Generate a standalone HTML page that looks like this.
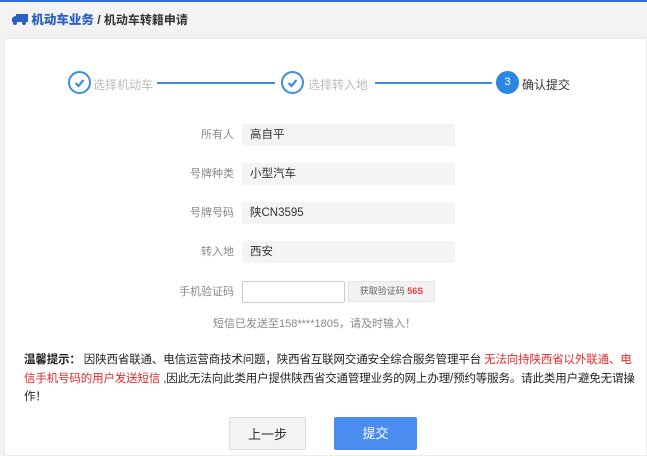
<!DOCTYPE html>
<html><head><meta charset="utf-8"><style>
*{margin:0;padding:0;box-sizing:border-box}
body{width:647px;height:456px;background:#f2f2f2;font-family:"Liberation Sans","Noto Sans CJK SC",sans-serif;position:relative;overflow:hidden;font-size:12px;color:#333}
.top{position:absolute;left:0;top:0;width:647px;height:2px;background:#2f6fd6}
.hdr{position:absolute;left:0;top:2px;width:647px;height:28px;background:#f3f3f3}
.hdr .t{position:absolute;left:12px;top:7px;font-size:12px;font-weight:bold;color:#333}
.hdr .t b{color:#2a5fc4;font-size:12.5px}
.card{position:absolute;left:4px;top:38px;width:643px;height:418px;background:#fff;border:1px solid #ececec}
.a{position:absolute}
.circ{position:absolute;width:23px;height:23px;border-radius:50%;border:2px solid #3b8de0;background:#fff}
.st{position:absolute;top:76px;font-size:12px;color:#bbb}
.ln{position:absolute;top:82px;height:2px;background:#3b8de0}
.lab{position:absolute;width:80px;left:154px;text-align:right;color:#888;font-size:11px;height:22px;line-height:22px}
.box{position:absolute;left:242px;width:213px;height:22px;background:#f4f4f4;padding-left:8px;line-height:22px;font-size:11.5px;color:#333}
.warn{position:absolute;left:24px;top:351px;width:612px;font-size:11.5px;line-height:18.5px;color:#222;letter-spacing:-0.15px}
.warn .r{color:#e62a2a}
.btn{position:absolute;top:417px;height:33px;line-height:33px;text-align:center;font-size:13px;border-radius:2px}
</style></head><body>
<div class="top"></div>
<div class="hdr"><div class="t"><svg width="16" height="12" style="vertical-align:-1px"><rect x="4" y="1" width="12" height="8" fill="#2a5fc4"/><path d="M0 5 L3 3 L4 3 L4 9 L0 9Z" fill="#2a5fc4"/><circle cx="3" cy="10" r="2" fill="#2a5fc4"/><circle cx="12" cy="10" r="2" fill="#2a5fc4"/></svg> <b>机动车业务</b> / 机动车转籍申请</div></div>
<div class="card"></div>
<div class="circ" style="left:68px;top:71px"></div>
<svg class="a" style="left:68px;top:71px" width="23" height="23"><path d="M7.5 12 L10.5 15 L15.5 9" stroke="#3b8de0" stroke-width="2.2" fill="none"/></svg>
<div class="st" style="left:93px">选择机动车</div>
<div class="ln" style="left:157px;width:118px"></div>
<div class="circ" style="left:281px;top:71px"></div>
<svg class="a" style="left:281px;top:71px" width="23" height="23"><path d="M7.5 12 L10.5 15 L15.5 9" stroke="#3b8de0" stroke-width="2.2" fill="none"/></svg>
<div class="st" style="left:308px">选择转入地</div>
<div class="ln" style="left:375px;width:117px"></div>
<div class="circ" style="left:496px;top:71px;background:#2b87e3;border-color:#2b87e3;color:#fff;text-align:center;line-height:19px;font-size:11px">3</div>
<div class="st" style="left:522px;color:#333">确认提交</div>

<div class="lab" style="top:124px">所有人</div><div class="box" style="top:124px">高自平</div>
<div class="lab" style="top:163px">号牌种类</div><div class="box" style="top:163px">小型汽车</div>
<div class="lab" style="top:202px">号牌号码</div><div class="box" style="top:202px">陕CN3595</div>
<div class="lab" style="top:241px">转入地</div><div class="box" style="top:241px">西安</div>
<div class="lab" style="top:281px">手机验证码</div>
<div class="a" style="left:242px;top:281px;width:103px;height:22px;border:1px solid #ccc;border-radius:2px;background:#fff"></div>
<div class="a" style="left:348px;top:281px;width:87px;height:21px;background:#f2f2f2;border:1px solid #e6e6e6;font-size:9px;line-height:19px;text-align:center;color:#666">获取验证码 <b style="color:#e64040">56S</b></div>
<div class="a" style="left:213px;top:315px;font-size:11px;color:#888">短信已发送至158****1805，请及时输入！</div>

<div class="warn"><b>温馨提示：</b> 因陕西省联通、电信运营商技术问题，陕西省互联网交通安全综合服务管理平台 <span class="r">无法向持陕西省以外联通、电信手机号码的用户发送短信</span> ,因此无法向此类用户提供陕西省交通管理业务的网上办理/预约等服务。请此类用户避免无谓操作！</div>

<div class="btn" style="left:229px;width:77px;background:#f3f3f3;border:1px solid #ddd;color:#333">上一步</div>
<div class="btn" style="left:334px;width:83px;background:#4a8cf0;color:#fff">提交</div>
</body></html>
